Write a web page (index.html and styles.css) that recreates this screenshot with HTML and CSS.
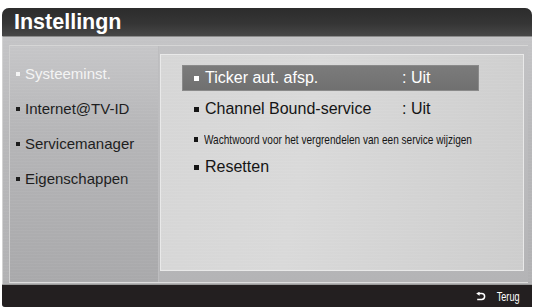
FILE: index.html
```html
<!DOCTYPE html>
<html lang="nl">
<head>
<meta charset="utf-8">
<title>Instellingn</title>
<link rel="stylesheet" href="styles.css">
</head>
<body>
<div class="screen">
  <div class="header"><h1 class="title">Instellingn</h1></div>
  <div class="body">
    <div class="box">
      <ul class="menu">
        <li class="menu-item is-focus"><span class="dot"></span>Systeeminst.</li>
        <li class="menu-item"><span class="dot"></span>Internet@TV-ID</li>
        <li class="menu-item"><span class="dot"></span>Servicemanager</li>
        <li class="menu-item"><span class="dot"></span>Eigenschappen</li>
      </ul>
      <div class="panel">
        <div class="opt is-selected"><span class="dot"></span><span class="opt-label">Ticker aut. afsp.</span><span class="opt-value">: Uit</span></div>
        <div class="opt opt-channel"><span class="dot"></span><span class="opt-label">Channel Bound-service</span><span class="opt-value">: Uit</span></div>
        <div class="opt opt-small"><span class="dot dot-small"></span><span class="small-text">Wachtwoord voor het vergrendelen van een service wijzigen</span></div>
        <div class="opt opt-reset"><span class="dot"></span><span class="opt-label">Resetten</span></div>
      </div>
    </div>
  </div>
  <div class="footer">
    <svg class="return-icon" width="10" height="9" viewBox="0 0 10 9" aria-hidden="true">
      <path d="M3 1.6 H5.6 A3 2.9 0 0 1 5.6 7.4 H1.2" fill="none" stroke="#fff" stroke-width="1.5"/>
      <polygon points="0.2,1.6 3.6,-0.4 3.6,3.8" fill="#fff"/>
    </svg>
    <span class="back-text">Terug</span>
  </div>
</div>
</body>
</html>
```
FILE: styles.css
```css
html, body {
  margin: 0;
  padding: 0;
  background: #ffffff;
}

body {
  font-family: "Liberation Sans", Arial, sans-serif;
}

.screen {
  width: 530px;
  height: 299px;
  margin: 8px 2px 0;
  border-radius: 7px 7px 0 3px;
  overflow: hidden;
  display: flex;
  flex-direction: column;
  background: #b6b6b8;
}

.header {
  height: 28px;
  flex: none;
  background: linear-gradient(#2c2c2c 0%, #353535 55%, #474747 100%);
  display: flex;
  align-items: center;
}

.title {
  margin: 0 0 0 12px;
  font-size: 21.5px;
  line-height: 28px;
  font-weight: bold;
  color: #ffffff;
}

.body {
  height: 248px;
  flex: none;
  box-sizing: border-box;
  padding: 8px 4px 2px 6px;
  border-left: 1px solid #d2d2d2;
  background:
    repeating-linear-gradient(0deg, rgba(255,255,255,0.035) 0 1px, rgba(0,0,0,0) 1px 3px),
    linear-gradient(#c4c4c6 0%, #b8b8ba 40%, #b1b1b3 100%);
  border-top: 1px solid #8c8c8c;
}

.box {
  height: 238px;
  box-sizing: border-box;
  display: flex;
  border-top: 1px solid #d6d6d6;
  border-left: 1px solid #d0d0d0;
  border-bottom: 1px solid #dedede;
  background: linear-gradient(#c2c2c4, #b4b4b6);
}

.menu {
  list-style: none;
  margin: 0;
  padding: 10px 0 0 6px;
  width: 149px;
  flex: none;
  box-sizing: border-box;
  background:
    repeating-linear-gradient(0deg, rgba(255,255,255,0.04) 0 1px, rgba(0,0,0,0) 1px 3px),
    linear-gradient(#c6c6c8 0%, #b6b6b8 35%, #a9a9ab 100%);
  border-right: 1px solid #bdbdbf;
}

.menu-item {
  height: 35px;
  display: flex;
  align-items: center;
  font-size: 15px;
  color: #1e1e1e;
}

.menu-item.is-focus {
  color: #f4f4f4;
}

.dot {
  width: 4px;
  height: 4px;
  flex: none;
  background: currentColor;
  margin-right: 5px;
}

.panel {
  flex: none;
  width: 364px;
  box-sizing: border-box;
  margin: 8px 4px 11px 1px;
  padding: 10px 0 0 21px;
  border: 1px solid #e9e9e9;
  background:
    repeating-linear-gradient(0deg, rgba(255,255,255,0.05) 0 1px, rgba(0,0,0,0) 1px 3px),
    linear-gradient(100deg, #d6d6d6 0%, #d9d9d9 40%, #cdcdcd 100%);
}

.opt {
  display: flex;
  align-items: center;
  height: 30px;
  padding-left: 12px;
  width: 297px;
  box-sizing: border-box;
  font-size: 16px;
  color: #151515;
}

.opt .dot {
  width: 5px;
  height: 5px;
  margin-right: 6px;
}

.opt.is-selected {
  height: 26px;
  margin-bottom: 3px;
  background: linear-gradient(#7b7b7b, #707070);
  border: 1px solid #8a8a8a;
  color: #ffffff;
  padding-left: 11px;
}

.opt-label {
  width: 197px;
  flex: none;
  white-space: nowrap;
}

.opt-value {
  white-space: nowrap;
}

.opt-small {
  height: 30px;
}

.opt .dot-small {
  width: 4px;
  height: 5px;
  margin-right: 6px;
}

.small-text {
  display: inline-block;
  font-size: 13.5px;
  white-space: nowrap;
  transform: scaleX(0.745);
  transform-origin: left center;
}

.opt-reset {
  height: 26px;
}

.footer {
  flex: 1;
  background: #231f20;
  border-top: 1px solid #9a9a9a;
  display: flex;
  align-items: center;
  justify-content: flex-end;
  padding-right: 12px;
}

.return-icon {
  display: block;
  margin-right: 1px;
}

.back-text {
  display: inline-block;
  font-size: 13px;
  color: #ffffff;
  transform: scaleX(0.7);
  transform-origin: right center;
}
```
